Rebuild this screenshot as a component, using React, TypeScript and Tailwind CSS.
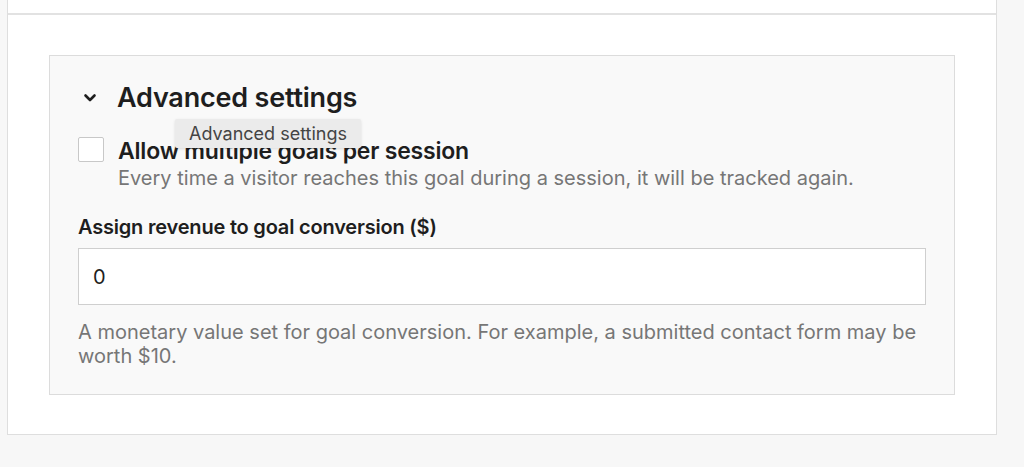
import React from 'react'

const ChevronDown = () => (
  <svg width="14" height="10" viewBox="0 0 14 10" className="shrink-0">
    <path d="M2.5 2.5 L7 7 L11.5 2.5" fill="none" stroke="#1e1e1e" strokeWidth="2.6" strokeLinecap="round" strokeLinejoin="round" />
  </svg>
)

const App: React.FC = () => {
  return (
    <div className="h-[467px] w-[1024px] overflow-hidden bg-[#f7f7f7] text-[#1e1e1e]" style={{ fontFamily: 'Inter, "Noto Sans", sans-serif' }}>
      <div className="ml-[7px] w-[990px] border-x border-b border-[#dedede] bg-white">
        {/* end of the previous section */}
        <div className="h-[15px] border-b-2 border-[#e2e2e2]" />

        <div className="px-[41px] pt-[40px] pb-[39px]">
          {/* Advanced settings panel */}
          <div className="relative border border-[#dcdcdc] bg-[#f9f9f9] px-[28px] pt-[27px] pb-[26px]">
            <div className="flex h-[30px] items-center">
              <span className="ml-[5px] mr-[20px] flex">
                <ChevronDown />
              </span>
              <h3 className="text-[27px] font-semibold leading-[30px] tracking-[-0.2px]">Advanced settings</h3>
            </div>

            <div className="mt-[24px] flex items-start">
              <div className="h-[25px] w-[26px] shrink-0 rounded-[2px] border border-[#c8c8c8] bg-white" />
              <div className="ml-[14px]">
                <div className="text-[23px] font-semibold leading-[28px] tracking-[-0.2px]">Allow multiple goals per session</div>
                <div className="text-[20px] leading-[26px] text-[#767676]">
                  Every time a visitor reaches this goal during a session, it will be tracked again.
                </div>
              </div>
            </div>

            <label className="mt-[23px] block text-[20px] font-semibold leading-[26px] tracking-[-0.2px]">
              Assign revenue to goal conversion ($)
            </label>
            <div className="mt-[8px] flex h-[57px] items-center border border-[#cfcfcf] bg-white px-[14px] text-[20px]">
              0
            </div>
            <p className="mt-[15px] text-[20px] leading-[24px] text-[#767676]">
              A monetary value set for goal conversion. For example, a submitted contact form may be worth $10.
            </p>

            {/* tooltip */}
            <div className="absolute left-[125px] top-[63px] rounded-[2px] bg-[#ebebeb] px-[14px] py-[3px] text-[18px] leading-[23px] text-[#444] shadow-[0_1px_3px_rgba(0,0,0,0.12)]">
              Advanced settings
            </div>
          </div>
        </div>
      </div>
    </div>
  )
}

export default App
